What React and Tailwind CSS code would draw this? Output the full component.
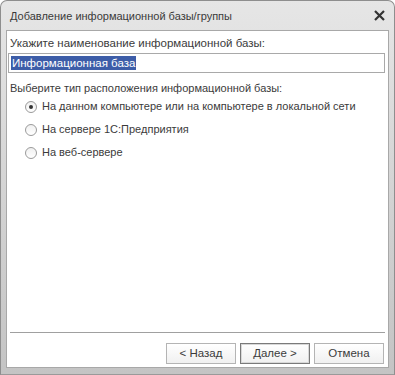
import { useState } from "react";

const font = { fontFamily: '"Liberation Sans", Arial, sans-serif' };

function Radio({ checked, label, onSelect }) {
  return (
    <label
      onClick={onSelect}
      className="flex items-center h-[23px] pl-[18px] text-[11px] text-[#3b3b3b] cursor-default"
    >
      <span className="w-[12px] h-[12px] rounded-full border border-[#9a9a9a] bg-gradient-to-b from-[#f0f0f0] to-white flex items-center justify-center mr-[5px]">
        {checked && <span className="w-[4px] h-[4px] rounded-full bg-[#333]" />}
      </span>
      {label}
    </label>
  );
}

function Button({ children, active }) {
  return (
    <button
      className={
        "w-[70px] h-[21px] text-[11.5px] text-[#3b3b3b] bg-gradient-to-b from-white to-[#f0f0f0] border " +
        (active ? "border-[#7a7a7a] shadow-[inset_0_0_0_1px_#d8d8d8]" : "border-[#b4b4b4]")
      }
    >
      {children}
    </button>
  );
}

export default function App() {
  const [place, setPlace] = useState("local");
  const [name] = useState("Информационная база");

  return (
    <div style={font} className="w-[395px] h-[375px] flex flex-col bg-gradient-to-b from-[#e6e6e6] via-[#d4d4d4] to-[#c4c4c4] rounded-t-[7px] border border-[#8e8e8e] border-b-[#9a9a9a]">
      <div className="h-[29px] flex items-center justify-between pl-[9px] pr-[9px]">
        <span className="text-[11px] text-[#3a3a3a] pt-[1px]">Добавление информационной базы/группы</span>
        <svg width="11" height="11" viewBox="0 0 11 11">
          <path d="M1 1L10 10M10 1L1 10" stroke="#333" strokeWidth="2.2" />
        </svg>
      </div>
      <div className="flex-1 mx-[5px] mb-[6px] bg-white border border-[#a8a8a8] flex flex-col">
        <div className="pl-[3px] pt-[5px] text-[11.5px] text-[#3b3b3b] leading-[14px]">
          Укажите наименование информационной базы:
        </div>
        <div className="ml-[1px] mr-[3px] mt-[3px] h-[20px] border border-[#a9a9a9] flex items-center px-[2px]">
          <span className="bg-[#3d5da8] text-white text-[11.5px] leading-[14px] px-[1px]">{name}</span>
        </div>
        <div className="pl-[3px] mt-[8px] text-[11px] text-[#3b3b3b] leading-[14px]">
          Выберите тип расположения информационной базы:
        </div>
        <div className="flex flex-col">
          <Radio checked={place === "local"} onSelect={() => setPlace("local")} label="На данном компьютере или на компьютере в локальной сети" />
          <Radio checked={place === "server"} onSelect={() => setPlace("server")} label="На сервере 1С:Предприятия" />
          <Radio checked={place === "web"} onSelect={() => setPlace("web")} label="На веб-сервере" />
        </div>
        <div className="flex-1" />
        <div className="mx-[3px] border-t border-[#a0a0a0]" />
        <div className="flex justify-end gap-[4px] pr-[4px] pt-[10px] pb-[3px]">
          <Button>&lt; Назад</Button>
          <Button active>Далее &gt;</Button>
          <Button>Отмена</Button>
        </div>
      </div>
    </div>
  );
}
